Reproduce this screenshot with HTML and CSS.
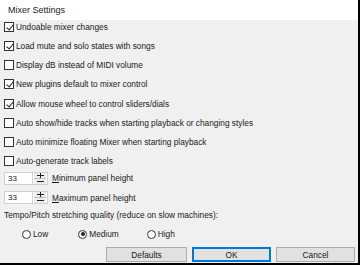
FILE: index.html
```html
<!DOCTYPE html>
<html lang="en">
<head>
    <meta charset="UTF-8">
    <title>Mixer Settings</title>
    <link rel="stylesheet" href="styles.css">
</head>
<body>
    <div class="dialog">
        <div class="title-bar">Mixer Settings</div>

        <div class="dialog-body">
            <div class="check-list">
                <label class="check-row"><span class="box checked"></span>Undoable mixer changes</label>
                <label class="check-row"><span class="box checked"></span>Load mute and solo states with songs</label>
                <label class="check-row"><span class="box"></span>Display dB instead of MIDI volume</label>
                <label class="check-row"><span class="box checked"></span>New plugins default to mixer control</label>
                <label class="check-row"><span class="box checked"></span>Allow mouse wheel to control sliders/dials</label>
                <label class="check-row"><span class="box"></span>Auto show/hide tracks when starting playback or changing styles</label>
                <label class="check-row"><span class="box"></span>Auto minimize floating Mixer when starting playback</label>
                <label class="check-row"><span class="box"></span>Auto-generate track labels</label>
            </div>

            <div class="spin-list">
                <div class="spin-row">
                    <span class="spin-input">33</span>
                    <span class="spin-buttons">
                        <span class="spin-up"><svg width="7" height="5" viewBox="0 0 7 5"><path d="M0 2.5h7M3.5 -1v7" stroke="#222" stroke-width="1"/></svg></span>
                        <span class="spin-down"><svg width="7" height="5" viewBox="0 0 7 5"><path d="M0 2.5h7" stroke="#222" stroke-width="1"/></svg></span>
                    </span>
                    <span class="spin-label"><u>M</u>inimum panel height</span>
                </div>
                <div class="spin-row">
                    <span class="spin-input">33</span>
                    <span class="spin-buttons">
                        <span class="spin-up"><svg width="7" height="5" viewBox="0 0 7 5"><path d="M0 2.5h7M3.5 -1v7" stroke="#222" stroke-width="1"/></svg></span>
                        <span class="spin-down"><svg width="7" height="5" viewBox="0 0 7 5"><path d="M0 2.5h7" stroke="#222" stroke-width="1"/></svg></span>
                    </span>
                    <span class="spin-label"><u>M</u>aximum panel height</span>
                </div>
            </div>

            <div class="group-label">Tempo/Pitch stretching quality (reduce on slow machines):</div>
            <div class="radio-row">
                <label class="radio radio-low"><span class="dot"></span>Low</label>
                <label class="radio radio-medium"><span class="dot selected"></span>Medium</label>
                <label class="radio radio-high"><span class="dot"></span>High</label>
            </div>

            <div class="button-row">
                <button class="btn btn-defaults">Defaults</button>
                <button class="btn btn-ok">OK</button>
                <button class="btn btn-cancel">Cancel</button>
            </div>
        </div>
    </div>
</body>
</html>
```

FILE: styles.css
```css
:root {
    --face: #f0f0f0;
    --text: #1a1a1a;
    --box-border: #333333;
    --edge: #adadad;
}

* {
    box-sizing: border-box;
}

body {
    margin: 0;
    font-family: "Liberation Sans", Arial, sans-serif;
    font-size: 8.3px;
    color: var(--text);
    background: #ffffff;
}

.dialog {
    width: 360px;
    height: 265px;
    background: var(--face);
    border-right: 2px solid #000;
    border-bottom: 2px solid #000;
    display: flex;
    flex-direction: column;
}

.title-bar {
    height: 20px;
    line-height: 20px;
    padding-left: 8px;
    background: #ffffff;
    font-size: 9px;
}

.dialog-body {
    flex: 1;
    padding: 0 0 0 4px;
    display: flex;
    flex-direction: column;
}

/* Checkboxes */
.check-list {
    display: flex;
    flex-direction: column;
    gap: 7.15px;
    padding-top: 1px;
}

.check-row {
    display: flex;
    align-items: center;
    height: 12px;
}

.box {
    width: 10px;
    height: 10px;
    border: 1px solid var(--box-border);
    background: #ffffff;
    margin-right: 2px;
    position: relative;
}

.box.checked::after {
    content: "";
    position: absolute;
    left: 2.5px;
    top: 0px;
    width: 3px;
    height: 6px;
    border-right: 1px solid #222;
    border-bottom: 1px solid #222;
    transform: rotate(40deg);
}

/* Spin boxes */
.spin-list {
    display: flex;
    flex-direction: column;
    gap: 6.5px;
    margin-top: 5px;
}

.spin-row {
    display: flex;
    align-items: center;
    height: 13px;
}

.spin-input {
    width: 29px;
    height: 13px;
    line-height: 12px;
    padding-left: 3px;
    background: #ffffff;
    border: 1px solid #d0d0d0;
    font-size: 8px;
}

.spin-buttons {
    display: flex;
    flex-direction: column;
    width: 15px;
    height: 13px;
    border: 1px solid #d0d0d0;
    border-left: none;
    background: #ffffff;
}

.spin-up,
.spin-down {
    flex: 1;
    display: flex;
    align-items: center;
    justify-content: center;
    background: #ececec;
    margin: 0 1px;
}

.spin-up {
    border-bottom: 1px solid #bdbdbd;
}

.spin-label {
    margin-left: 4px;
}

/* Radio group */
.group-label {
    margin-top: 5px;
    height: 12px;
    line-height: 12px;
}

.radio-row {
    display: flex;
    align-items: center;
    height: 12px;
    margin-top: 7px;
}

.radio {
    display: flex;
    align-items: center;
}

.radio-low {
    margin-left: 18px;
}

.radio-medium {
    margin-left: 30px;
}

.radio-high {
    margin-left: 28px;
}

.dot {
    width: 9px;
    height: 9px;
    border: 1px solid #333;
    border-radius: 50%;
    background: #ffffff;
    margin-right: 2px;
    position: relative;
}

.dot.selected::after {
    content: "";
    position: absolute;
    left: 1.5px;
    top: 1.5px;
    width: 4px;
    height: 4px;
    border-radius: 50%;
    background: #222;
}

/* Buttons */
.button-row {
    display: flex;
    gap: 5px;
    margin-top: auto;
    margin-bottom: 1px;
    padding-left: 102px;
}

.btn {
    width: 79px;
    height: 15px;
    padding: 0;
    font-family: inherit;
    font-size: 8.3px;
    color: var(--text);
    background: #e1e1e1;
    border: 1px solid var(--edge);
}

.btn-defaults {
    width: 81px;
}

.btn-ok {
    border: 1px solid #0078d7;
    box-shadow: inset 0 0 0 1px #0078d7;
}
```
